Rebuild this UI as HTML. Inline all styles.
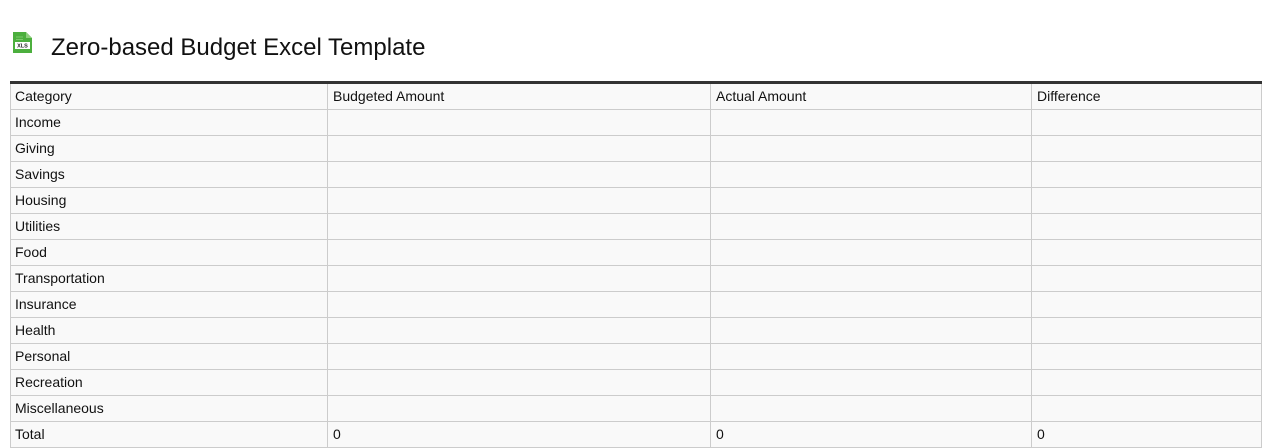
<!DOCTYPE html><html><head><style>
body{margin:0;background:#fff;font-family:"Liberation Sans",sans-serif;width:1262px;height:448px;overflow:hidden}
h1{position:absolute;left:51px;top:33px;margin:0;font-size:24px;font-weight:normal;color:#111;line-height:30px}
table{position:absolute;left:10px;top:81px;width:1252px;border-collapse:collapse;border-top:3px solid #333;font-size:14px;color:#111}
td{border:1px solid #ccc;height:25px;padding:0 4px;background:#f9f9f9;line-height:25px}
td+td{padding-left:5px}
</style></head><body>
<svg style="position:absolute;left:13px;top:32px" width="19" height="21" viewBox="0 0 19 21"><path d="M0 0h13l6 6v15H0z" fill="#4caf3e"/><path d="M13 0v6h6z" fill="#8fd07e"/><rect x="2" y="10" width="15" height="7" fill="#fff"/><text x="9.5" y="15.5" font-size="5.5" text-anchor="middle" font-family="Liberation Sans" font-weight="bold" fill="#222">XLS</text><line x1="3" y1="5" x2="10" y2="5" stroke="#7cc96c"/><line x1="3" y1="7.5" x2="10" y2="7.5" stroke="#7cc96c"/></svg>
<h1>Zero-based Budget Excel Template</h1>
<table>
<colgroup><col style="width:317px"><col style="width:383px"><col style="width:321px"><col></colgroup>
<tr><td>Category</td><td>Budgeted Amount</td><td>Actual Amount</td><td>Difference</td></tr>
<tr><td>Income</td><td></td><td></td><td></td></tr>
<tr><td>Giving</td><td></td><td></td><td></td></tr>
<tr><td>Savings</td><td></td><td></td><td></td></tr>
<tr><td>Housing</td><td></td><td></td><td></td></tr>
<tr><td>Utilities</td><td></td><td></td><td></td></tr>
<tr><td>Food</td><td></td><td></td><td></td></tr>
<tr><td>Transportation</td><td></td><td></td><td></td></tr>
<tr><td>Insurance</td><td></td><td></td><td></td></tr>
<tr><td>Health</td><td></td><td></td><td></td></tr>
<tr><td>Personal</td><td></td><td></td><td></td></tr>
<tr><td>Recreation</td><td></td><td></td><td></td></tr>
<tr><td>Miscellaneous</td><td></td><td></td><td></td></tr>
<tr><td>Total</td><td>0</td><td>0</td><td>0</td></tr>
</table>
</body></html>
